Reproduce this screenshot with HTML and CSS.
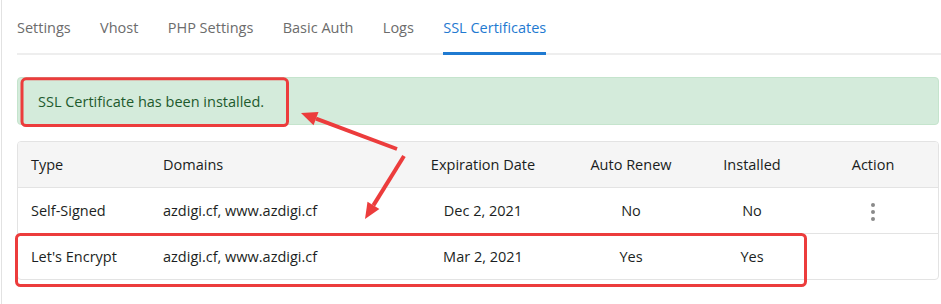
FILE: index.html
```html
<!DOCTYPE html>
<html lang="en">
<head>
    <meta charset="UTF-8">
    <title>SSL Certificates</title>
    <link rel="stylesheet" href="styles.css">
</head>
<body>
    <div class="page">
        <ul class="tabs">
            <li>Settings</li>
            <li>Vhost</li>
            <li>PHP Settings</li>
            <li>Basic Auth</li>
            <li>Logs</li>
            <li class="active">SSL Certificates</li>
        </ul>

        <div class="alert">SSL Certificate has been installed.</div>

        <div class="card">
            <table>
                <colgroup>
                    <col class="c-type">
                    <col class="c-domains">
                    <col class="c-date">
                    <col class="c-renew">
                    <col class="c-installed">
                    <col class="c-action">
                </colgroup>
                <thead>
                    <tr>
                        <th>Type</th>
                        <th>Domains</th>
                        <th class="center">Expiration Date</th>
                        <th class="center">Auto Renew</th>
                        <th class="center">Installed</th>
                        <th class="center">Action</th>
                    </tr>
                </thead>
                <tbody>
                    <tr>
                        <td>Self-Signed</td>
                        <td>azdigi.cf, www.azdigi.cf</td>
                        <td class="center">Dec 2, 2021</td>
                        <td class="center">No</td>
                        <td class="center">No</td>
                        <td class="center"><span class="dots"><i></i><i></i><i></i></span></td>
                    </tr>
                    <tr>
                        <td>Let's Encrypt</td>
                        <td>azdigi.cf, www.azdigi.cf</td>
                        <td class="center">Mar 2, 2021</td>
                        <td class="center">Yes</td>
                        <td class="center">Yes</td>
                        <td class="center"></td>
                    </tr>
                </tbody>
            </table>
        </div>
    </div>

    <!-- annotation layer: red boxes and arrows drawn over the screenshot -->
    <svg class="marks" width="941" height="304" viewBox="0 0 941 304">
        <rect x="22" y="78.8" width="265.5" height="46.7" rx="4" fill="none" stroke="#ec3c3c" stroke-width="3"/>
        <rect x="16.5" y="234.5" width="789" height="51" rx="4" fill="none" stroke="#ec3c3c" stroke-width="3"/>
        <line x1="397" y1="149" x2="316" y2="118.6" stroke="#ec3c3c" stroke-width="4"/>
        <polygon points="301,113 318.5,112 313.5,125.2" fill="#ec3c3c"/>
        <line x1="404" y1="156" x2="373.4" y2="205.4" stroke="#ec3c3c" stroke-width="4"/>
        <polygon points="365,219 379.4,209.1 367.5,201.7" fill="#ec3c3c"/>
    </svg>
</body>
</html>
```

FILE: styles.css
```css
body {
    margin: 0;
    background: #fff;
    font-family: "Open Sans", "Noto Sans", sans-serif;
    font-size: 14.5px;
    color: #212529;
}
.page {
    margin-left: 1px;
    border-left: 1px solid #e2e2e2;
    min-height: 304px;
    padding: 0 2px 0 15px;
}
.tabs {
    list-style: none;
    margin: 0 -2px 0 0;
    padding: 18px 0 0;
    display: flex;
    gap: 29.3px;
    border-bottom: 2px solid #eeeeee;
}
.tabs li {
    color: #6c6c6c;
    line-height: 20px;
    padding: 0 0 14px;
    margin-bottom: -2px;
    border-bottom: 3px solid transparent;
}
.tabs li.active {
    color: #1f7ad1;
    border-bottom-color: #1f7ad1;
}
.alert {
    margin-top: 22px;
    height: 46px;
    display: flex;
    align-items: center;
    padding: 0 20px;
    background: #d4ebdb;
    border: 1px solid #c5e4cd;
    border-radius: 4px;
    color: #1e5a2d;
}
.card {
    margin-top: 16px;
    border: 1px solid #e3e3e3;
    border-radius: 4px;
    overflow: hidden;
}
table {
    width: 100%;
    border-collapse: collapse;
    table-layout: fixed;
}
.c-type { width: 132px; }
.c-domains { width: 251px; }
.c-date { width: 164px; }
.c-renew { width: 132px; }
.c-installed { width: 110px; }
.c-action { width: 132px; }
th {
    background: #f5f5f5;
    font-weight: normal;
    text-align: left;
    height: 45px;
    padding: 0 13px;
    color: #1a1d21;
}
td {
    height: 45px;
    padding: 0 13px;
    border-top: 1px solid #e3e3e3;
    color: #1c1f23;
}
.center {
    text-align: center;
}
.dots {
    display: inline-flex;
    flex-direction: column;
    gap: 3px;
    vertical-align: middle;
}
.dots i {
    width: 4px;
    height: 4px;
    border-radius: 50%;
    background: #8a8a8a;
}
.marks {
    position: absolute;
    left: 0;
    top: 0;
    pointer-events: none;
}
```
